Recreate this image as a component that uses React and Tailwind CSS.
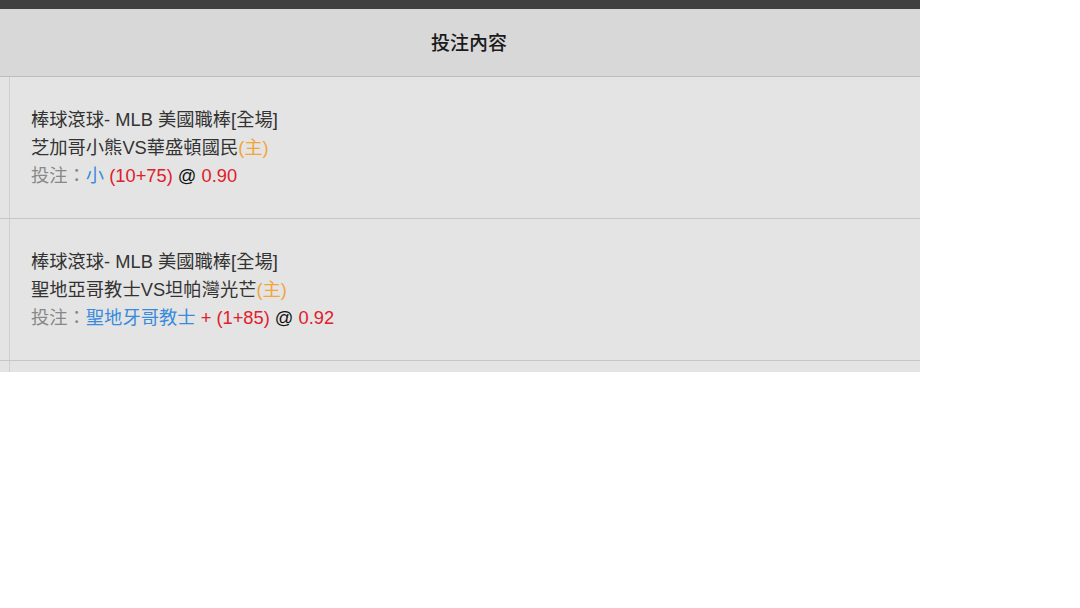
const ROWS = [
  {
    league: "棒球滾球- MLB 美國職棒[全場]",
    teams: "芝加哥小熊VS華盛頓國民",
    pick: "小",
    plus: false,
    line: "(10+75)",
    odds: "0.90",
  },
  {
    league: "棒球滾球- MLB 美國職棒[全場]",
    teams: "聖地亞哥教士VS坦帕灣光芒",
    pick: "聖地牙哥教士",
    plus: true,
    line: "(1+85)",
    odds: "0.92",
  },
];

export default function App() {
  return (
    <div
      className="w-[1080px] h-[608px] bg-white overflow-hidden"
      style={{ fontFamily: '"Liberation Sans", "Noto Sans CJK TC", sans-serif' }}
    >
      <div className="w-[920px]">
        <div className="h-[9px] bg-[#404040]" />
        <div className="h-[68px] bg-[#d8d8d8] border-b border-[#bdbdbd] flex items-center justify-center pl-[18px] pt-[3px] text-[19px] font-medium text-[#1a1a1a]">
          投注內容
        </div>
        <div className="h-[295px] overflow-hidden bg-[#e4e4e4]">
          {[...ROWS, null].map((row, i) => (
            <div key={i} className="flex border-b border-[#c6c6c6]">
              <div className="w-[10px] border-r border-[#cfcfcf] shrink-0" />
              <div className="flex-1 h-[141px] pl-[21px] flex flex-col justify-center text-[18.3px] leading-[28px] text-[#333]">
                {row && (
                  <>
                    <div>{row.league}</div>
                    <div>
                      {row.teams}
                      <span className="text-[#f2a53a]">(主)</span>
                    </div>
                    <div className="text-[#888]">
                      投注：<span className="text-[#3a8bdc]">{row.pick}</span>{" "}
                      <span className="text-[#e0202a]">
                        {row.plus ? "+ " : ""}
                        {row.line}
                      </span>{" "}
                      <span className="text-[#111]">@</span>{" "}
                      <span className="text-[#e0202a]">{row.odds}</span>
                    </div>
                  </>
                )}
              </div>
            </div>
          ))}
        </div>
      </div>
    </div>
  );
}
